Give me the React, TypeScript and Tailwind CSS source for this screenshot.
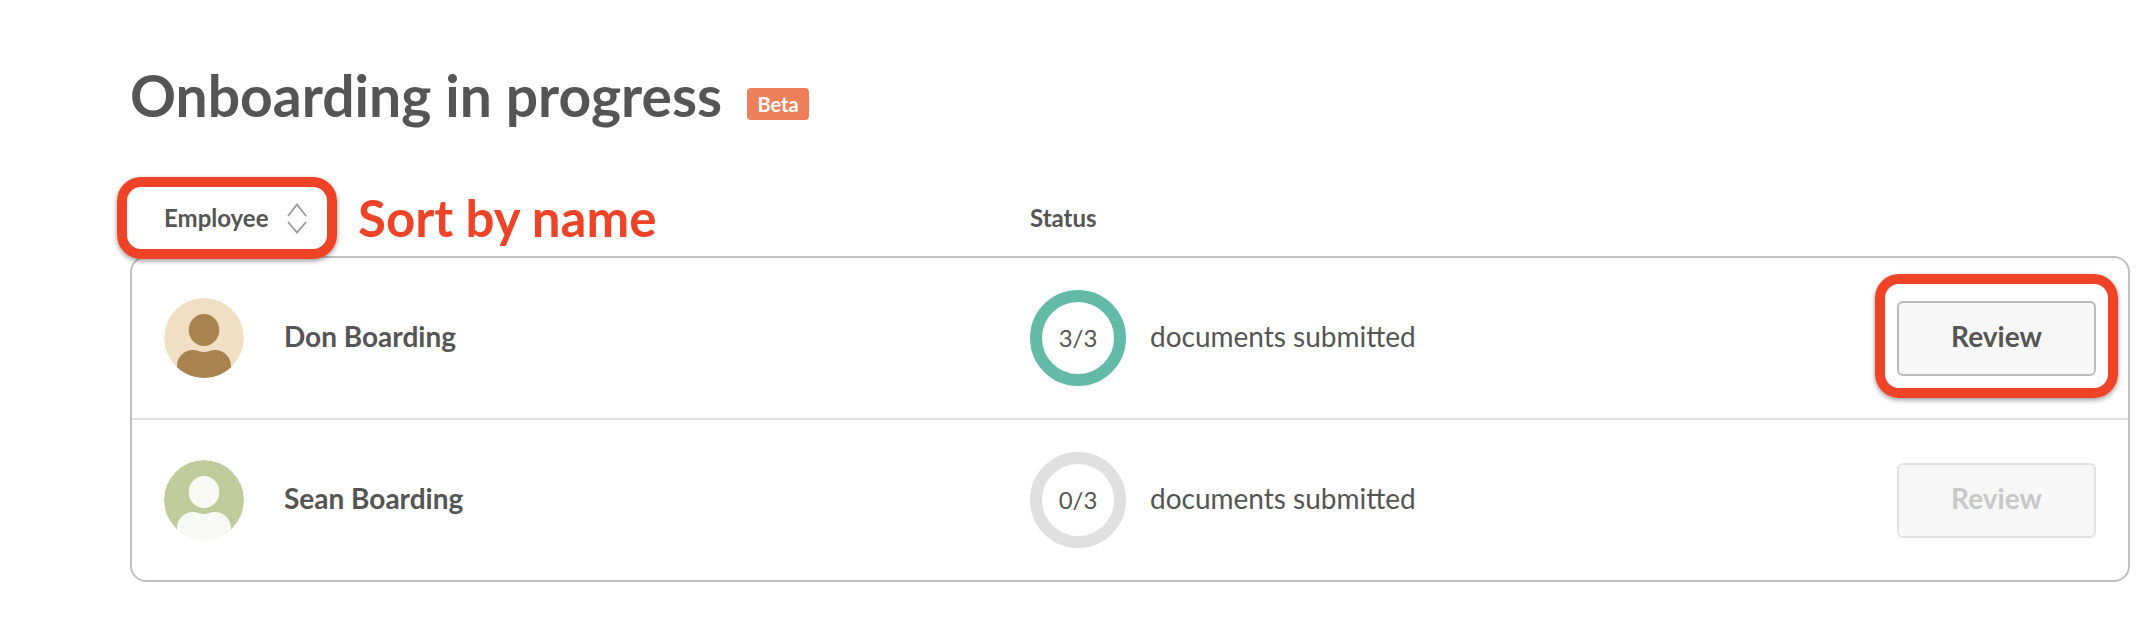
const font = "font-['Lato','Liberation_Sans',sans-serif]";

function Avatar({ bg, fg }: { bg: string; fg: string }) {
  return (
    <svg viewBox="0 0 80 80" className="w-20 h-20 rounded-full shrink-0">
      <circle cx="40" cy="40" r="40" fill={bg} />
      <ellipse cx="40" cy="32" rx="15.3" ry="16" fill={fg} />
      <path
        d="M13 68C13 59 20 52 29 52C33 52 36 54 40 54C44 54 47 52 51 52C60 52 67 59 67 68L67 80L13 80Z"
        fill={fg}
      />
    </svg>
  );
}

function Ring({ label, done }: { label: string; done: boolean }) {
  return (
    <div
      className={`w-24 h-24 shrink-0 rounded-full border-12 flex items-center justify-center text-[24px] text-[#555] ${
        done ? "border-[#63bba7]" : "border-[#e0e0e0]"
      }`}
    >
      {label}
    </div>
  );
}

function Row({
  name,
  count,
  done,
  bg,
  fg,
}: {
  name: string;
  count: string;
  done: boolean;
  bg: string;
  fg: string;
}) {
  return (
    <div className="h-[160px] flex items-center pl-8 pr-8">
      <div className="w-[866px] flex items-center gap-10">
        <Avatar bg={bg} fg={fg} />
        <span className="text-[28px] font-bold text-[#555] pb-1">{name}</span>
      </div>
      <div className="flex-1 flex items-center gap-6">
        <Ring label={count} done={done} />
        <span className="text-[28px] text-[#555] pb-1">documents submitted</span>
      </div>
      <div className="relative">
        <button
          type="button"
          className={`w-[199px] h-[75px] rounded-md border-2 bg-[#f7f7f7] text-[28px] font-bold pb-1 ${
            done ? "border-[#bbb] text-[#555]" : "border-[#e3e3e3] text-[#c8c8c8]"
          }`}
        >
          Review
        </button>
        {done && (
          <div className="absolute -left-[22px] -right-[22px] -top-[27px] -bottom-[22px] rounded-[24px] border-10 border-[#ee4326] shadow-[0_2px_5px_rgba(0,0,0,0.4)]" />
        )}
      </div>
    </div>
  );
}

export default function App() {
  return (
    <div className={`${font} bg-white min-h-[638px] pl-[130px] pr-6 pt-[63px]`}>
      {/* Title */}
      <div className="flex items-center gap-[25px] h-[64px]">
        <h1 className="text-[57px] leading-none font-bold text-[#555]">Onboarding in progress</h1>
        <span className="w-[62px] h-8 mt-[18px] rounded bg-[#ee7f5b] text-white text-[20px] font-bold flex items-center justify-center">
          Beta
        </span>
      </div>

      {/* Header */}
      <div className="flex items-center h-[62px] mt-[60px] mb-[7px] pl-[34px] text-[24px] font-bold text-[#555]">
        <div className="w-[866px] h-full relative flex items-center">
          <span>Employee</span>
          <svg viewBox="0 0 20 31" className="w-5 h-[31px] ml-[18px]" fill="none" stroke="#999" strokeWidth="1.8">
            <path d="M1 13L10 1.5L19 13" />
            <path d="M1 19L10 29.5L19 19" />
          </svg>
          <div className="absolute -left-[47px] top-[-10px] w-[220px] h-[82px] rounded-[24px] border-10 border-[#ee4326] shadow-[0_2px_5px_rgba(0,0,0,0.4)]" />
          <span className="absolute left-[194px] top-0 text-[51px] leading-[62px] font-bold text-[#ee4326]">
            Sort by name
          </span>
        </div>
        <span>Status</span>
      </div>

      {/* Table */}
      <div className="w-[2000px] border-2 border-[#c0c0c0] rounded-2xl">
        <Row name="Don Boarding" count="3/3" done bg="#f0dfc2" fg="#a88350" />
        <div className="h-0.5 bg-[#e0e0e0]" />
        <Row name="Sean Boarding" count="0/3" done={false} bg="#c0cb9b" fg="#f8f9f4" />
      </div>
    </div>
  );
}
